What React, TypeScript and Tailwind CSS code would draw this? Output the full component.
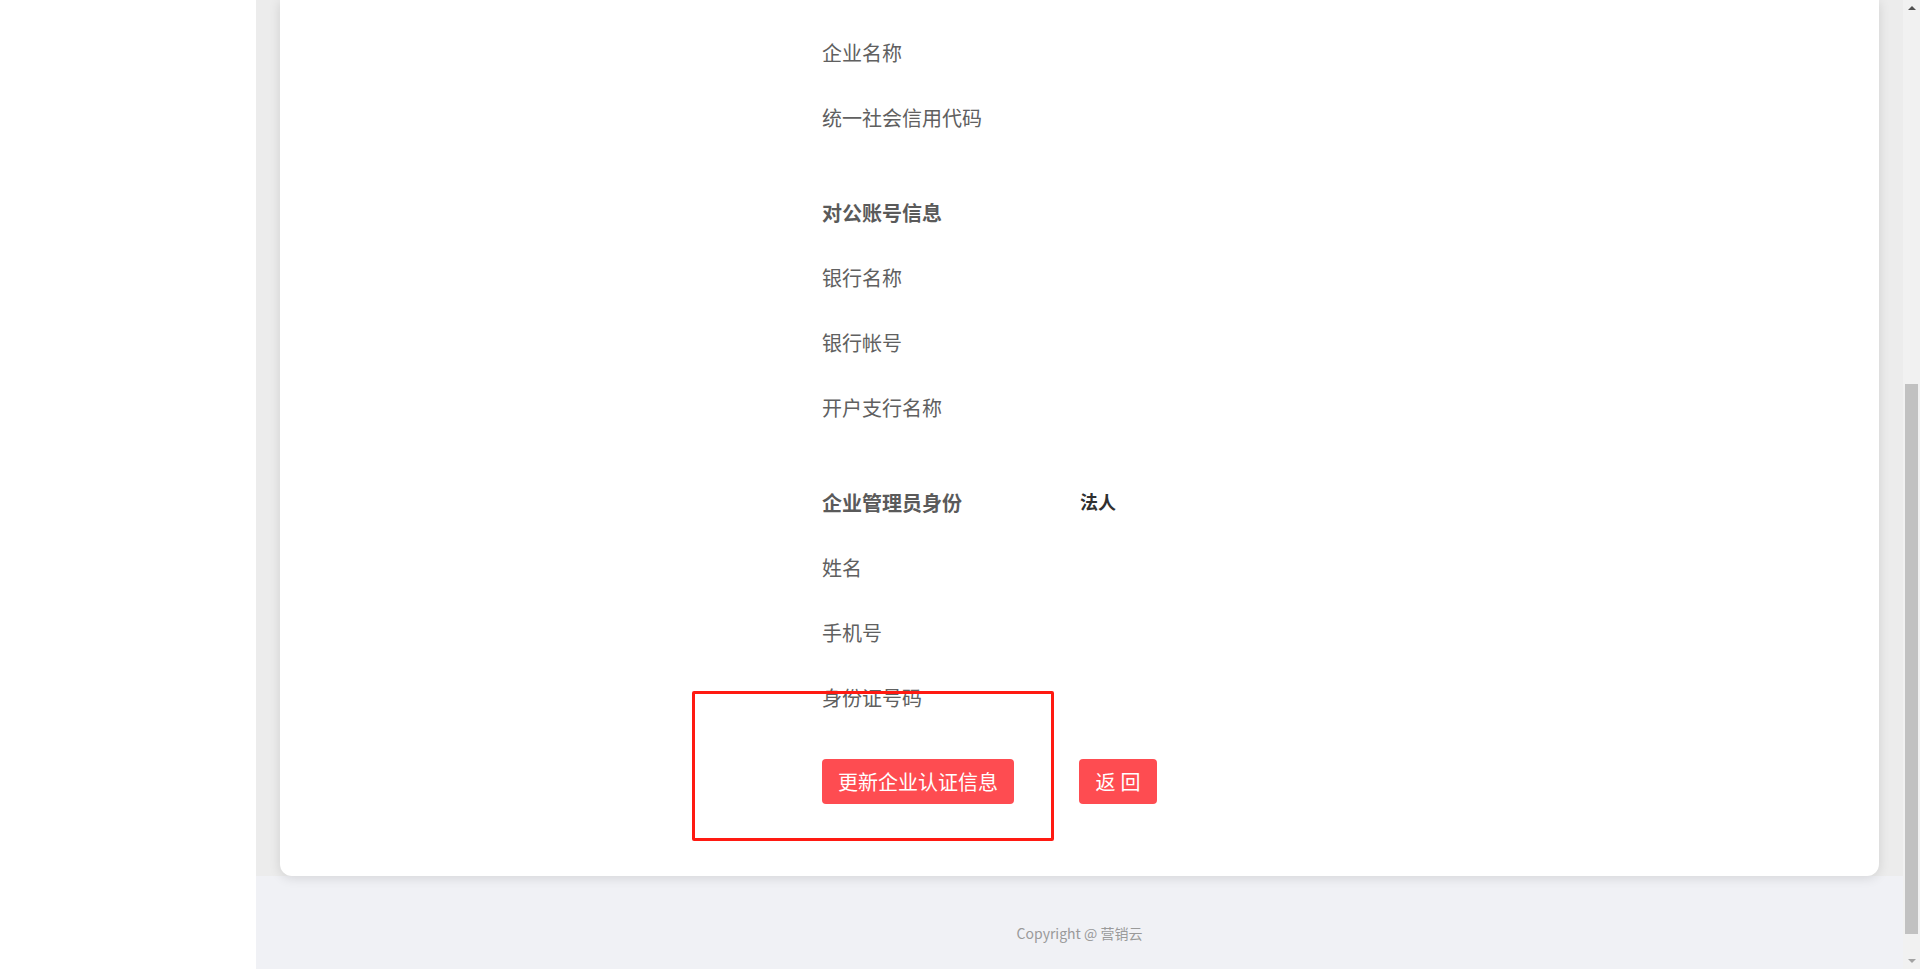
import React from "react";

type Field = { label: string; value?: string };

type Section = { title?: string; badge?: string; fields: Field[] };

const sections: Section[] = [
  { fields: [{ label: "企业名称" }, { label: "统一社会信用代码" }] },
  {
    title: "对公账号信息",
    fields: [{ label: "银行名称" }, { label: "银行帐号" }, { label: "开户支行名称" }],
  },
  {
    title: "企业管理员身份",
    badge: "法人",
    fields: [{ label: "姓名" }, { label: "手机号" }, { label: "身份证号码" }],
  },
];

const font = "font-['Microsoft_YaHei','Noto_Sans_CJK_SC',sans-serif]";

const Row = ({ children }: { children: React.ReactNode }) => (
  <div className="flex h-[65px] items-center">{children}</div>
);

const Scrollbar = () => (
  <div className="relative h-full w-[17px] shrink-0 bg-[#f1f1f1]">
    <div className="absolute left-1/2 top-[6px] h-0 w-0 -translate-x-1/2 border-x-[4px] border-b-[4px] border-x-transparent border-b-[#505050]" />
    <div className="absolute left-[2px] top-[384px] h-[550px] w-[13px] bg-[#c1c1c1]" />
    <div className="absolute bottom-[6px] left-1/2 h-0 w-0 -translate-x-1/2 border-x-[4px] border-t-[4px] border-x-transparent border-t-[#a3a3a3]" />
  </div>
);

const App = () => {
  return (
    <div className={`flex h-[969px] w-full overflow-hidden bg-white ${font}`}>
      {/* side menu */}
      <div className="h-full w-[256px] shrink-0 bg-white" />

      <div className="flex min-w-0 flex-1 flex-col">
        <div className="flex flex-1 flex-col bg-[#ececec] px-6">
          <div className="relative flex-1 rounded-b-xl bg-white pb-[72px] pl-[542px] pt-[20px] shadow-[0_2px_12px_rgba(0,0,0,0.12)]">
            {sections.map((s, i) => (
              <div key={i} className={i > 0 ? "mt-[30px]" : ""}>
                {s.title && (
                  <Row>
                    <span className="w-[258px] text-[20px] font-bold text-[#5a5a5a]">
                      {s.title}
                    </span>
                    {s.badge && (
                      <span className="-translate-y-px text-[18px] font-bold text-[#303030]">
                        {s.badge}
                      </span>
                    )}
                  </Row>
                )}
                {s.fields.map((f) => (
                  <Row key={f.label}>
                    <span className="w-[258px] text-[20px] text-[#606060]">{f.label}</span>
                    <span className="text-[20px] text-[#303030]">{f.value}</span>
                  </Row>
                ))}
              </div>
            ))}

            <div className="mt-[29px] flex items-center">
              <div className="w-[257px]">
                <button className="flex h-[45px] w-[192px] items-center justify-center rounded bg-[#fe4c51] text-[20px] text-white">
                  更新企业认证信息
                </button>
              </div>
              <button className="flex h-[45px] w-[78px] items-center justify-center gap-[5px] rounded bg-[#fe4c51] text-[20px] text-white">
                <span>返</span>
                <span>回</span>
              </button>
            </div>

            {/* highlight frame */}
            <div className="pointer-events-none absolute left-[412px] top-[691px] h-[150px] w-[362px] rounded-[2px] border-[3px] border-[#ff1a12]" />
          </div>
        </div>

        <div className="h-[93px] shrink-0 bg-[#f0f1f5] pt-[44px] text-center">
          <span className="text-[14px] leading-5 text-[#9a9a9a]">Copyright @ 营销云</span>
        </div>
      </div>

      <Scrollbar />
    </div>
  );
};

export default App;
